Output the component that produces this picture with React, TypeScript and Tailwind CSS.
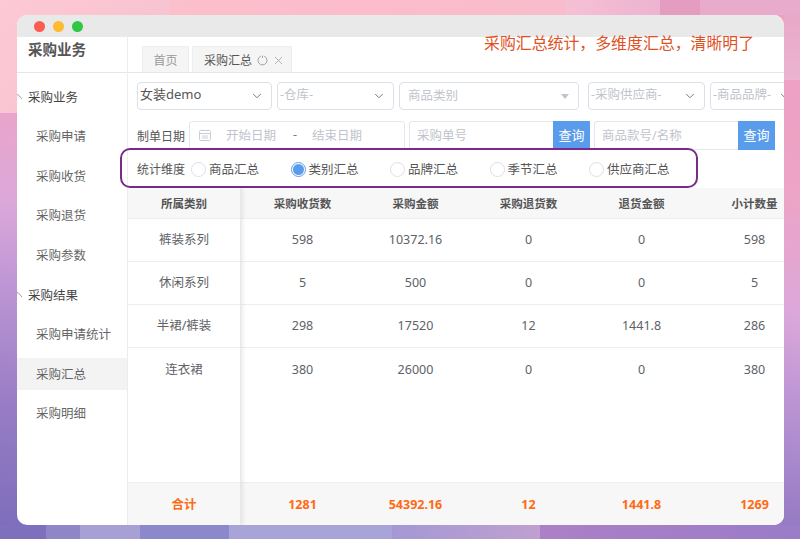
import { ChevronDown, X } from 'lucide-react';

const FONT = "font-['Noto_Sans','Noto_Sans_CJK_SC',sans-serif]";

const menu = [
  { title: '采购业务', items: ['采购申请', '采购收货', '采购退货', '采购参数'] },
  { title: '采购结果', items: ['采购申请统计', '采购汇总', '采购明细'] },
];

const columns = ['采购收货数', '采购金额', '采购退货数', '退货金额', '小计数量'];

const rows = [
  { name: '裤装系列', values: ['598', '10372.16', '0', '0', '598'] },
  { name: '休闲系列', values: ['5', '500', '0', '0', '5'] },
  { name: '半裙/裤装', values: ['298', '17520', '12', '1441.8', '286'] },
  { name: '连衣裙', values: ['380', '26000', '0', '0', '380'] },
];

const totals = ['1281', '54392.16', '12', '1441.8', '1269'];

const dimensions = ['商品汇总', '类别汇总', '品牌汇总', '季节汇总', '供应商汇总'];

function SelectBox({ label, width, dark }: { label: string; width: string; dark?: boolean }) {
  return (
    <div className={`${width} h-[28px] shrink-0 rounded-[4px] border border-[#dcdfe6] bg-white flex items-center justify-between pl-[2px] pr-[7px]`}>
      <span className={`-mt-[2px] ${dark ? 'text-[13px] text-[#555]' : 'text-[12.5px] text-[#c0c4cc]'}`}>{label}</span>
      <ChevronDown className="w-[14px] h-[14px] text-[#666]" strokeWidth={1.5} />
    </div>
  );
}

function SearchBox({ placeholder, width }: { placeholder: string; width: string }) {
  return (
    <div className="flex h-[29px] shrink-0">
      <div className={`${width} border border-[#e4e7ed] border-r-0 rounded-l-[3px] bg-white flex items-center pl-[7px] pt-[2px] text-[12.5px] text-[#c0c4cc]`}>
        {placeholder}
      </div>
      <div className="w-[37px] bg-[#5a9cec] text-white text-[13px] pt-[1px] flex items-center justify-center">查询</div>
    </div>
  );
}

function Radio({ checked }: { checked?: boolean }) {
  return (
    <span className={`w-[15px] h-[15px] shrink-0 rounded-full border flex items-center justify-center bg-white ${checked ? 'border-[#5a9cec]' : 'border-[#dcdfe6]'}`}>
      {checked && <span className="w-[11px] h-[11px] rounded-full bg-[#5a9cec]" />}
    </span>
  );
}

function MenuArrow() {
  return (
    <svg width="6" height="6" viewBox="0 0 6 6" className="absolute left-0 top-[15px]">
      <path d="M0 1 L1 0.5 L5 5" fill="none" stroke="#888" strokeWidth="0.8" />
    </svg>
  );
}

export default function App() {
  return (
    <div className={`${FONT} relative w-[800px] h-[539px] overflow-hidden pt-[15px] pl-[17px] pr-[16px] pb-[14px] bg-[linear-gradient(188deg,#ee9ec2_0%,#eda4c6_30%,#dca8da_48%,#bb94d4_62%,#9a7ec6_78%,#7a6cba_100%)]`}>
      {/* background blocks */}
      <div className="absolute left-0 top-0 w-[170px] h-[113px] bg-[linear-gradient(135deg,#fdc9d3,#f6c0d0)]" />
      <div className="absolute left-[170px] top-0 w-[395px] h-[15px] bg-[linear-gradient(90deg,#fcc0ca,#fcbcca,#f8bccc)]" />
      <div className="absolute left-[565px] top-0 w-[95px] h-[15px] bg-[linear-gradient(90deg,#f6c0d4,#ecb4d0)]" />
      <div className="absolute left-[660px] top-0 w-[40px] h-[15px] bg-[#e49cc0]" />
      <div className="absolute left-[700px] top-0 w-[100px] h-[15px] bg-[#e8abcc]" />
      <div className="absolute left-[784px] top-[15px] w-[16px] h-[65px] bg-[linear-gradient(180deg,#e8a8c8,#ecb4d0)]" />
      <div className="absolute left-0 top-[525px] w-[46px] h-[14px] bg-[#7e70bc]" />
      <div className="absolute left-[46px] top-[525px] w-[34px] h-[14px] bg-[#8f86c8]" />
      <div className="absolute left-[80px] top-[525px] w-[60px] h-[14px] bg-[#a7a0d4]" />
      <div className="absolute left-[140px] top-[525px] w-[89px] h-[14px] bg-[#8c88cc]" />
      <div className="absolute left-[229px] top-[525px] w-[163px] h-[14px] bg-[#a8a4d8]" />
      <div className="absolute left-[392px] top-[525px] w-[148px] h-[14px] bg-[linear-gradient(90deg,#a498d4,#bfa0d0)]" />
      <div className="absolute left-[540px] top-[525px] w-[260px] h-[14px] bg-[linear-gradient(90deg,#ac80c6,#9a7cc8)]" />

      <div className="relative h-full rounded-[10px] overflow-hidden bg-white flex flex-col">
        <div className="h-[22px] shrink-0 bg-[#e9e9e9] flex items-center gap-[8px] pl-[17px]">
          <span className="w-[11px] h-[11px] rounded-full bg-[#fc5b51]" />
          <span className="w-[11px] h-[11px] rounded-full bg-[#fdbb30]" />
          <span className="w-[11px] h-[11px] rounded-full bg-[#2ec845]" />
        </div>

        <div className="flex flex-1 min-h-0">
          <aside className="w-[111px] shrink-0 border-r border-[#eeeeee] flex flex-col">
            <div className="h-[36px] shrink-0 border-b border-[#e6e6e6] pl-[11px] text-[14.5px] font-bold text-[#555] leading-[24px]">
              采购业务
            </div>
            <div className="pt-[6px]">
              {menu.map((group) => (
                <div key={group.title}>
                  <div className="relative h-[39.5px] pl-[11px] flex items-center text-[12.5px] text-[#444]">
                    <MenuArrow />
                    {group.title}
                  </div>
                  {group.items.map((item) => (
                    <div key={item} className="h-[39.6px] flex items-start">
                      <div className={`w-full h-[32px] mt-[2px] pl-[19px] pt-[2px] flex items-center text-[12.5px] text-[#666] ${item === '采购汇总' ? 'bg-[#f3f3f3]' : ''}`}>
                        {item}
                      </div>
                    </div>
                  ))}
                </div>
              ))}
            </div>
          </aside>

          <main className="relative flex-1 min-w-0 flex flex-col">
            <div className="h-[36px] shrink-0 border-b border-[#e6e6e6] flex items-end gap-[3px] pl-[14px]">
              <div className="w-[47px] h-[26px] pt-[3px] bg-[#f5f5f6] border border-b-0 border-[#eeeeee] flex items-center justify-center text-[12px] text-[#999]">
                首页
              </div>
              <div className="w-[100px] h-[26px] pt-[2px] bg-[#f5f5f6] border border-b-0 border-[#eeeeee] flex items-center pl-[11px] text-[12px] text-[#555]">
                采购汇总
                <svg width="11" height="11" viewBox="0 0 11 11" className="ml-[5px] text-[#999]">
                  <path d="M3.8 1.2 A4.5 4.5 0 1 0 7.2 1.2 M5.5 0.6 V3" fill="none" stroke="currentColor" strokeWidth="0.9" />
                </svg>
                <X className="w-[13px] h-[13px] ml-[4px] text-[#999]" strokeWidth={1.3} />
              </div>
            </div>

            <div className="shrink-0 flex gap-[5px] pl-[9px] pt-[9px]">
              <SelectBox label="女装demo" width="w-[135px]" dark />
              <SelectBox label="-仓库-" width="w-[117px]" />
              <div className="w-[180px] h-[28px] shrink-0 rounded-[4px] border border-[#dcdfe6] bg-white flex items-center justify-between pl-[8px] pt-[1px] pr-[9px] text-[12.5px] text-[#c0c4cc]">
                商品类别
                <span className="w-0 h-0 border-x-[4px] border-x-transparent border-t-[5px] border-t-[#c0c4cc]" />
              </div>
              <div className="ml-[4px]">
                <SelectBox label="-采购供应商-" width="w-[117px]" />
              </div>
              <SelectBox label="-商品品牌-" width="w-[90px]" />
            </div>

            <div className="shrink-0 flex items-center pl-[9px] pt-[11px] text-[12px] text-[#555]">
              <span className="w-[52px] shrink-0 pt-[2px]">制单日期</span>
              <div className="w-[216px] h-[29px] shrink-0 border border-[#e4e7ed] rounded-[3px] flex items-center text-[12.5px] text-[#c0c4cc]">
                <svg width="12" height="12" viewBox="0 0 12 12" className="ml-[9px] -mt-[1px] text-[#c9ced6]">
                  <rect x="0.5" y="1.5" width="11" height="10" rx="1" fill="none" stroke="currentColor" />
                  <path d="M0.5 4.5 H11.5 M3 0.5 V2 M9 0.5 V2 M3 7 H9 M3 9 H9" stroke="currentColor" />
                </svg>
                <span className="ml-[15px] pt-[2px]">开始日期</span>
                <span className="ml-[17px] text-[#777]">-</span>
                <span className="ml-[15px] pt-[2px]">结束日期</span>
              </div>
              <div className="ml-[4px]">
                <SearchBox placeholder="采购单号" width="w-[144px]" />
              </div>
              <div className="ml-[4px]">
                <SearchBox placeholder="商品款号/名称" width="w-[144px]" />
              </div>
            </div>

            <div className="h-[38px] shrink-0 flex items-center pl-[9px] text-[12.5px] text-[#555]">
              <span className="w-[54px] shrink-0 text-[12px] pt-[2px]">统计维度</span>
              {dimensions.map((d, i) => (
                <div key={d} className="w-[99.5px] shrink-0 flex items-center gap-[3px]">
                  <Radio checked={i === 1} />
                  <span className="pt-[2px]">{d}</span>
                </div>
              ))}
            </div>

            <div className="flex flex-1 min-h-0 text-[12.5px] text-[#606266]">
              <div className="relative z-10 w-[113px] shrink-0 flex flex-col border-r border-[#e8e8e8] shadow-[2px_0_4px_rgba(0,0,0,0.08)] bg-white">
                <div className="h-[31px] shrink-0 pt-[1px] bg-[#f7f7f8] border-b border-[#ebeef5] flex items-center justify-center text-[11.5px] font-semibold text-[#555]">
                  所属类别
                </div>
                {rows.map((r, i) => (
                  <div key={r.name} className={`h-[43px] shrink-0 pt-[1px] flex items-center justify-center ${i < 3 ? 'border-b border-[#ebeef5]' : ''}`}>
                    {r.name}
                  </div>
                ))}
                <div className="flex-1" />
                <div className="h-[43px] shrink-0 pt-[2px] bg-[#f7f7f8] border-t border-[#ebeef5] flex items-center justify-center text-[12.5px] font-bold text-[#ff6a13]">
                  合计
                </div>
              </div>

              <div className="flex-1 min-w-0 overflow-hidden flex flex-col">
                <div className="h-[31px] shrink-0 pt-[1px] bg-[#f7f7f8] border-b border-[#ebeef5] pl-[5px] flex items-center text-[11.5px] font-semibold text-[#555]">
                  {columns.map((c) => (
                    <div key={c} className="w-[113px] shrink-0 text-center">{c}</div>
                  ))}
                </div>
                {rows.map((r, i) => (
                  <div key={r.name} className={`h-[43px] shrink-0 pt-[1px] pl-[5px] flex items-center ${i < 3 ? 'border-b border-[#ebeef5]' : ''}`}>
                    {r.values.map((v, j) => (
                      <div key={j} className="w-[113px] shrink-0 text-center">{v}</div>
                    ))}
                  </div>
                ))}
                <div className="flex-1" />
                <div className="h-[43px] shrink-0 pt-[2px] bg-[#f7f7f8] border-t border-[#ebeef5] pl-[5px] flex items-center font-bold text-[#ff6a13]">
                  {totals.map((v, j) => (
                    <div key={j} className="w-[113px] shrink-0 text-center">{v}</div>
                  ))}
                </div>
              </div>
            </div>

            {/* highlight frame over the filter bar */}
            <div className="absolute left-[-8px] top-[111px] w-[578px] h-[40px] rounded-[10px] border-2 border-[#7a2a8f]" />
          </main>
        </div>

        <div className="absolute left-[467px] top-[17px] text-[15.9px] leading-[22px] whitespace-nowrap text-[#e0501e]">
          采购汇总统计，多维度汇总，清晰明了
        </div>
      </div>
    </div>
  );
}
